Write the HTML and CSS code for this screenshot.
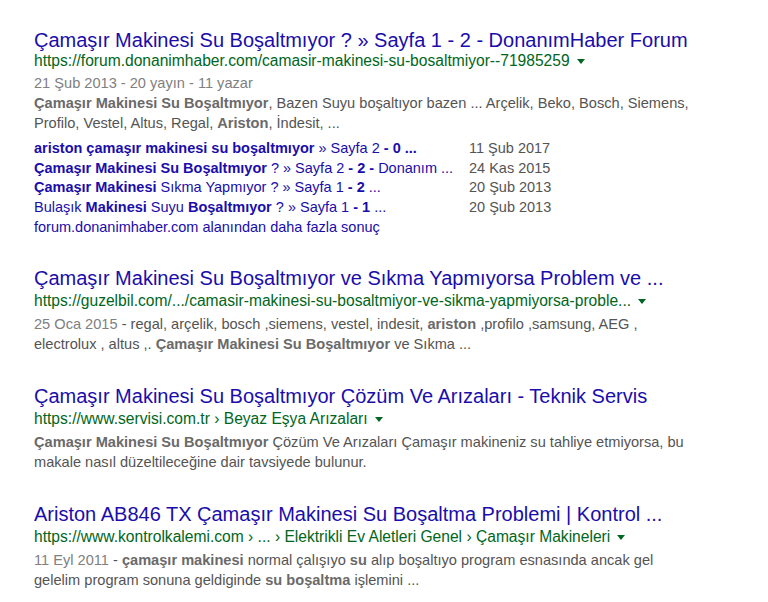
FILE: index.html
```html
<!DOCTYPE html>
<html>
    <head>
        <title>Arama sonuçları</title>
        <link rel="stylesheet" href="styles.css">
    </head>
    <body>
        <div class="results">
            <div class="result first">
                <a class="title" href="#">Çamaşır Makinesi Su Boşaltmıyor ? » Sayfa 1 - 2 - DonanımHaber Forum</a>
                <div class="url">https://forum.donanimhaber.com/camasir-makinesi-su-bosaltmiyor--71985259<span class="arrow"></span></div>
                <div class="snippet">
                    <div class="meta">21 Şub 2013 - 20 yayın - 11 yazar</div>
                    <b>Çamaşır Makinesi Su Boşaltmıyor</b>, Bazen Suyu boşaltıyor bazen ... Arçelik, Beko, Bosch, Siemens, Profilo, Vestel, Altus, Regal, <b>Ariston</b>, İndesit, ...
                </div>
                <table class="sublinks">
                    <tr>
                        <td><a href="#"><b>ariston çamaşır makinesi su boşaltmıyor</b> » Sayfa 2 <b>- 0 ...</b></a></td>
                        <td class="date">11 Şub 2017</td>
                    </tr>
                    <tr>
                        <td><a href="#"><b>Çamaşır Makinesi Su Boşaltmıyor</b> ? » Sayfa 2 <b>- 2 -</b> Donanım ...</a></td>
                        <td class="date">24 Kas 2015</td>
                    </tr>
                    <tr>
                        <td><a href="#"><b>Çamaşır Makinesi</b> Sıkma Yapmıyor ? » Sayfa 1 <b>- 2</b> ...</a></td>
                        <td class="date">20 Şub 2013</td>
                    </tr>
                    <tr>
                        <td><a href="#">Bulaşık <b>Makinesi</b> Suyu <b>Boşaltmıyor</b> ? » Sayfa 1 <b>- 1</b> ...</a></td>
                        <td class="date">20 Şub 2013</td>
                    </tr>
                </table>
                <a class="more" href="#">forum.donanimhaber.com alanından daha fazla sonuç</a>
            </div>

            <div class="result">
                <a class="title" href="#">Çamaşır Makinesi Su Boşaltmıyor ve Sıkma Yapmıyorsa Problem ve ...</a>
                <div class="url">https://guzelbil.com/.../camasir-makinesi-su-bosaltmiyor-ve-sikma-yapmiyorsa-proble...<span class="arrow"></span></div>
                <div class="snippet">
                    <span class="f">25 Oca 2015</span> - regal, arçelik, bosch ,siemens, vestel, indesit, <b>ariston</b> ,profilo ,samsung, AEG , electrolux , altus ,. <b>Çamaşır Makinesi Su Boşaltmıyor</b> ve Sıkma ...
                </div>
            </div>

            <div class="result">
                <a class="title" href="#">Çamaşır Makinesi Su Boşaltmıyor Çözüm Ve Arızaları - Teknik Servis</a>
                <div class="url">https://www.servisi.com.tr › Beyaz Eşya Arızaları<span class="arrow"></span></div>
                <div class="snippet">
                    <b>Çamaşır Makinesi Su Boşaltmıyor</b> Çözüm Ve Arızaları Çamaşır makineniz su tahliye etmiyorsa, bu makale nasıl düzeltileceğine dair tavsiyede bulunur.
                </div>
            </div>

            <div class="result">
                <a class="title" href="#">Ariston AB846 TX Çamaşır Makinesi Su Boşaltma Problemi | Kontrol ...</a>
                <div class="url">https://www.kontrolkalemi.com › ... › Elektrikli Ev Aletleri Genel › Çamaşır Makineleri<span class="arrow"></span></div>
                <div class="snippet">
                    <span class="f">11 Eyl 2011</span> - <b>çamaşır makinesi</b> normal çalışıyo <b>su</b> alıp boşaltıyo program esnasında ancak gel gelelim program sonuna geldiginde <b>su boşaltma</b> işlemini ...
                </div>
            </div>
        </div>
    </body>
</html>
```

FILE: styles.css
```css
body {
    margin: 0;
    background: #fff;
    font-family: "Liberation Sans", Arial, sans-serif;
}

.results {
    padding: 29px 0 0 34px;
    width: 658px;
}

.result {
    margin-bottom: 31px;
}

.result.first {
    margin-bottom: 29px;
}

.title {
    display: block;
    font-size: 20px;
    line-height: 22px;
    color: #1a0dab;
    text-decoration: none;
    white-space: nowrap;
}

.url {
    margin-top: 1px;
    font-size: 15.6px;
    line-height: 22px;
    color: #006621;
    white-space: nowrap;
}

.first .url {
    line-height: 18px;
}

.arrow {
    display: inline-block;
    width: 0;
    height: 0;
    margin-left: 7px;
    vertical-align: 2px;
    border-top: 5px solid #006621;
    border-left: 4px solid transparent;
    border-right: 4px solid transparent;
}

.snippet {
    margin-top: 2px;
    font-size: 14.6px;
    line-height: 20px;
    color: #545454;
}

.first .snippet {
    margin-top: 3px;
}

.snippet b {
    color: #6a6a6a;
}

.meta,
.f {
    color: #808080;
}

.sublinks {
    margin-top: 6px;
    border-collapse: collapse;
    font-size: 14.5px;
}

.sublinks td {
    padding: 0;
    height: 19.7px;
    line-height: 19.7px;
    white-space: nowrap;
}

.sublinks td:first-child {
    width: 435px;
}

.sublinks a {
    color: #1a0dab;
    text-decoration: none;
}

.sublinks b {
    color: #1a0dab;
}

.sublinks .date {
    color: #545454;
}

.more {
    display: block;
    font-size: 14.5px;
    line-height: 19.7px;
    color: #1a0dab;
    text-decoration: none;
}
```
